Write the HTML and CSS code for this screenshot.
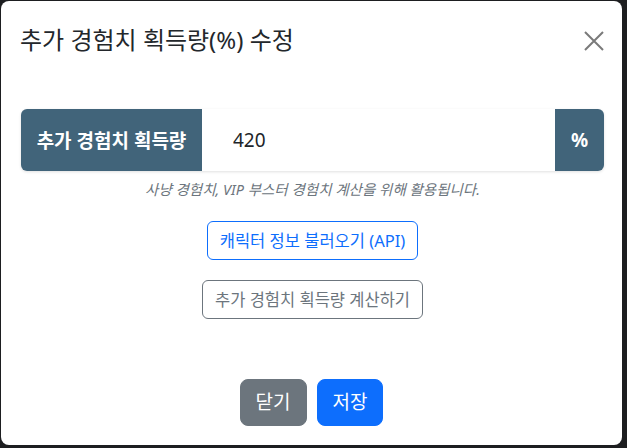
FILE: index.html
```html
<!DOCTYPE html>
<html lang="ko">
<head>
  <meta charset="UTF-8" />
  <meta name="viewport" content="width=device-width, initial-scale=1.0" />
  <title>추가 경험치 획득량 수정</title>
  <link rel="stylesheet" href="styles.css">
</head>
<body>
  <div class="modal">
    <div class="modal-header">
      <h5 class="modal-title">추가 경험치 획득량(%) 수정</h5>
      <button class="btn-close" aria-label="닫기">
        <svg width="20" height="20" viewBox="0 0 20 20">
          <path d="M1 1 L19 19 M19 1 L1 19" stroke="#7a7a7a" stroke-width="2" fill="none" />
        </svg>
      </button>
    </div>

    <div class="modal-body">
      <div class="input-group">
        <span class="input-label">추가 경험치 획득량</span>
        <input type="text" class="input-field" value="420" />
        <span class="input-unit">%</span>
      </div>
      <p class="help">사냥 경험치, VIP 부스터 경험치 계산을 위해 활용됩니다.</p>

      <div class="actions">
        <button class="btn btn-outline-primary">캐릭터 정보 불러오기 (API)</button>
        <button class="btn btn-outline-secondary">추가 경험치 획득량 계산하기</button>
      </div>
    </div>

    <div class="modal-footer">
      <button class="btn btn-lg btn-secondary">닫기</button>
      <button class="btn btn-lg btn-primary">저장</button>
    </div>
  </div>
</body>
</html>
```

FILE: styles.css
```css
* {
  box-sizing: border-box;
  font-family: "Noto Sans", "Noto Sans CJK KR", sans-serif;
}
body {
  margin: 0;
  padding: 1px 5px 3px 1px;
  background: #1d1e20;
}
.modal {
  width: 621px;
  height: 444px;
  background: #fff;
  border-radius: 8px;
  display: flex;
  flex-direction: column;
}
.modal-header {
  display: flex;
  justify-content: space-between;
  align-items: center;
  padding: 23px 18px 0 19px;
}
.modal-title {
  margin: 0;
  font-size: 24px;
  line-height: 32px;
  font-weight: 400;
  color: #23272b;
}
.btn-close {
  border: none;
  background: none;
  padding: 0;
  width: 20px;
  height: 20px;
  margin-top: 2px;
  cursor: pointer;
}
.btn-close svg {
  display: block;
}
.modal-body {
  padding: 0 18px 0 20px;
  margin-top: 53px;
}
.input-group {
  display: flex;
  height: 62px;
  border-radius: 6px;
  overflow: hidden;
  box-shadow: 0 1px 3px rgba(0, 0, 0, 0.12);
}
.input-label,
.input-unit {
  display: flex;
  align-items: center;
  justify-content: center;
  background: #41647a;
  color: #fff;
  font-weight: 700;
}
.input-label {
  width: 181px;
  font-size: 19px;
}
.input-unit {
  width: 49px;
  font-size: 19px;
}
.input-field {
  flex: 1;
  min-width: 0;
  border: none;
  outline: none;
  padding: 0 31px;
  font-size: 19px;
  color: #212529;
  background: #fff;
}
.help {
  margin: 8px 0 0;
  text-align: center;
  font-size: 14.5px;
  line-height: 20px;
  font-style: italic;
  color: #6c757d;
}
.actions {
  display: flex;
  flex-direction: column;
  align-items: center;
  gap: 20px;
  margin-top: 22px;
}
.btn {
  font-size: 16.5px;
  line-height: 25px;
  padding: 6px 12px;
  border: 1px solid transparent;
  border-radius: 6px;
  background: #fff;
  cursor: pointer;
}
.btn-outline-primary {
  color: #0d6efd;
  border-color: #0d6efd;
}
.btn-outline-secondary {
  color: #6c757d;
  border-color: #6c757d;
}
.modal-footer {
  margin-top: auto;
  display: flex;
  justify-content: center;
  gap: 10px;
  padding-bottom: 19px;
}
.btn-lg {
  font-size: 19px;
  line-height: 27px;
  padding: 9px 15px;
  border-radius: 8px;
  color: #fff;
}
.btn-secondary {
  background: #6c757d;
  border-color: #6c757d;
}
.btn-primary {
  background: #0d6efd;
  border-color: #0d6efd;
}
```
